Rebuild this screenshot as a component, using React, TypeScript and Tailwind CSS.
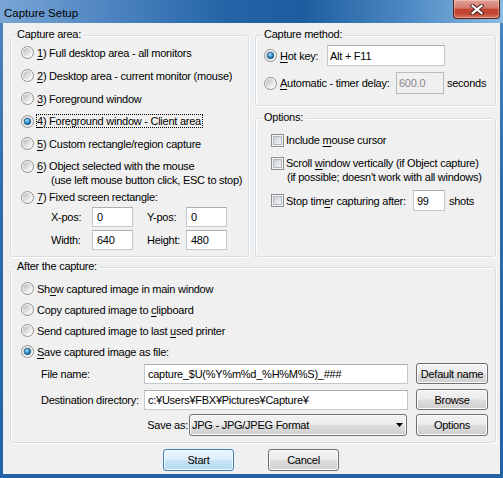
import React from "react";

const inputCls =
  "bg-white border border-[#c3c6cc] border-t-[#abadb3] flex items-center leading-[14px] shrink-0";
const btnCls =
  "flex items-center justify-center shrink-0 rounded-[3px] border border-[#707070] bg-[linear-gradient(to_bottom,#f2f2f2_0%,#ebebeb_48%,#dddddd_52%,#cfcfcf_100%)] shadow-[inset_0_0_0_1px_#fbfbfb] leading-[14px]";
const defBtnCls =
  "flex items-center justify-center shrink-0 rounded-[3px] border border-[#3c7fb1] bg-[linear-gradient(to_bottom,#eaf5fc_0%,#dcedf8_48%,#c8e4f6_52%,#b5daf2_100%)] shadow-[inset_0_0_0_1px_#f4fbff] leading-[14px]";

function Radio({ checked = false }: { checked?: boolean }) {
  return (
    <svg width="13" height="13" viewBox="0 0 13 13" className="block shrink-0">
      <defs>
        <linearGradient id="radInner" x1="0.15" y1="0.15" x2="0.85" y2="0.85">
          <stop offset="0" stopColor="#c4c4c4" />
          <stop offset="1" stopColor="#f8f8f8" />
        </linearGradient>
        <radialGradient id="radDot" cx="0.4" cy="0.35" r="0.7">
          <stop offset="0" stopColor="#b8e8fc" />
          <stop offset="0.45" stopColor="#3c98d4" />
          <stop offset="1" stopColor="#0d4a78" />
        </radialGradient>
      </defs>
      <circle cx="6.5" cy="6.5" r="6" fill="#f6f6f6" stroke="#8e8f8f" />
      <circle cx="6.5" cy="6.5" r="4.5" fill="url(#radInner)" />
      {checked && (
        <circle cx="6.5" cy="6.5" r="3.3" fill="url(#radDot)" stroke="#174f7a" strokeWidth="0.6" />
      )}
    </svg>
  );
}

function Check() {
  return (
    <svg width="13" height="13" viewBox="0 0 13 13" className="block shrink-0">
      <defs>
        <linearGradient id="chkIn" x1="0" y1="0" x2="1" y2="1">
          <stop offset="0" stopColor="#c9cdd3" />
          <stop offset="1" stopColor="#f7f7f7" />
        </linearGradient>
      </defs>
      <rect x="0.5" y="0.5" width="12" height="12" fill="#f4f4f4" stroke="#8e8f8f" />
      <rect x="2.5" y="2.5" width="8" height="8" fill="url(#chkIn)" stroke="#b3b8be" />
    </svg>
  );
}

function Group({
  title,
  titleLeft,
  className,
  children,
}: {
  title: string;
  titleLeft: string;
  className: string;
  children?: React.ReactNode;
}) {
  return (
    <div
      className={`relative shrink-0 border border-[#d5dfe5] rounded-[3px] shadow-[inset_1px_1px_0_#ffffff,1px_1px_0_#ffffff] ${className}`}
    >
      <span className={`absolute -top-[9px] ${titleLeft} px-[2px] bg-[#f0f0f0] leading-[14px]`}>
        {title}
      </span>
      {children}
    </div>
  );
}

function U({ children }: { children: React.ReactNode }) {
  return <span className="underline underline-offset-[1.5px]">{children}</span>;
}

export default function App() {
  return (
    <div className="font-['Liberation_Sans',Arial,sans-serif] text-[11px] tracking-[-0.25px] text-black w-[503px] h-[478px] flex flex-col bg-[linear-gradient(to_bottom,#4f86c0_0%,#2f6cab_40%,#2363a5_100%)]">
      {/* Title bar */}
      <div className="h-[23px] shrink-0 flex items-start justify-between bg-[linear-gradient(to_right,#7aa6d6_0%,#4d84c0_22%,#2465a7_45%,#1d5c9e_60%,#4f8cc5_82%,#8bbbe0_100%)]">
        <span className="pl-[4px] pt-[6px] text-[11.5px] leading-[15px] tracking-normal">Capture Setup</span>
        <div className="mr-[3px] w-[47px] h-[19px] rounded-b-[4px] border border-t-0 border-[#5b2019] bg-[linear-gradient(to_bottom,#e3a095_0%,#d37a6e_45%,#c2412f_52%,#c24a36_78%,#dc7b62_100%)] shadow-[inset_0_0_0_1px_rgba(255,255,255,0.3)] flex items-center justify-center">
          <svg width="14" height="11" viewBox="0 0 14 11">
            <path d="M2.5 1.8 L11.5 9.2 M11.5 1.8 L2.5 9.2" stroke="#3a1512" strokeWidth="4" strokeLinecap="square" />
            <path d="M2.5 1.8 L11.5 9.2 M11.5 1.8 L2.5 9.2" stroke="#ffffff" strokeWidth="2.2" strokeLinecap="square" />
          </svg>
        </div>
      </div>

      {/* Client area */}
      <div className="mx-[3px] mb-[4px] flex-1 bg-[#f0f0f0] pl-[7px] pr-[4px] pt-[12px] flex flex-col">
        <div className="flex gap-[6px]">
          {/* Capture area */}
          <Group title="Capture area:" titleLeft="left-[4px]" className="w-[239px] h-[222px]">
            <div className="flex flex-col pt-[5px]">
              <div className="flex items-center h-[23px] pl-[10px] gap-[3px]">
                <Radio />
                <span className="leading-[14px]"><U>1</U>) Full desktop area - all monitors</span>
              </div>
              <div className="flex items-center h-[23px] pl-[10px] gap-[3px]">
                <Radio />
                <span className="leading-[14px]"><U>2</U>) Desktop area - current monitor (mouse)</span>
              </div>
              <div className="flex items-center h-[23px] pl-[10px] gap-[3px]">
                <Radio />
                <span className="leading-[14px]"><U>3</U>) Foreground window</span>
              </div>
              <div className="flex items-center h-[22px] pl-[10px] gap-[3px]">
                <Radio checked />
                <span className="-ml-px border border-dotted border-black leading-[12px] pr-px"><U>4</U>) Foreground window - Client area</span>
              </div>
              <div className="flex items-center h-[23px] pl-[10px] gap-[3px]">
                <Radio />
                <span className="leading-[14px]"><U>5</U>) Custom rectangle/region capture</span>
              </div>
              <div className="flex items-start h-[32px] pt-[4px] pl-[10px] gap-[3px]">
                <div className="pt-[0.5px]"><Radio /></div>
                <div className="flex flex-col leading-[14px]">
                  <span><U>6</U>) Object selected with the mouse</span>
                  <span className="pl-[14px]">(use left mouse button click, ESC to stop)</span>
                </div>
              </div>
              <div className="flex items-center h-[20px] pl-[10px] gap-[3px]">
                <Radio />
                <span className="leading-[14px]"><U>7</U>) Fixed screen rectangle:</span>
              </div>
              <div className="flex items-center h-[20px] pl-[40px]">
                <span className="w-[41px] shrink-0">X-pos:</span>
                <div className={`${inputCls} w-[41px] h-[20px] pl-[4px]`}>0</div>
                <span className="w-[39px] ml-[14px] shrink-0">Y-pos:</span>
                <div className={`${inputCls} w-[41px] h-[20px] pl-[4px]`}>0</div>
              </div>
              <div className="flex items-center h-[20px] mt-[3px] pl-[40px]">
                <span className="w-[41px] shrink-0">Width:</span>
                <div className={`${inputCls} w-[41px] h-[20px] pl-[4px]`}>640</div>
                <span className="w-[39px] ml-[14px] shrink-0">Height:</span>
                <div className={`${inputCls} w-[41px] h-[20px] pl-[4px]`}>480</div>
              </div>
            </div>
          </Group>

          {/* Right column */}
          <div className="flex flex-col w-[241px] gap-[12px]">
            <Group title="Capture method:" titleLeft="left-[6px]" className="w-[241px] h-[71px]">
              <div className="flex flex-col pt-[9px] pl-[8px]">
                <div className="flex items-center h-[21px]">
                  <Radio checked />
                  <span className="ml-[3px] w-[47px] shrink-0 leading-[14px]"><U>H</U>ot key:</span>
                  <div className={`${inputCls} w-[118px] h-[21px] pl-[2px]`}>Alt + F11</div>
                </div>
                <div className="flex items-center h-[22px] mt-[6px]">
                  <Radio />
                  <span className="ml-[3px] w-[116px] shrink-0 leading-[14px] whitespace-nowrap"><U>A</U>utomatic - timer delay:</span>
                  <div className="flex items-center shrink-0 w-[48px] h-[22px] pl-[2px] border border-[#b8bcc2] bg-[#f0f0f0] text-[#8a8a8a] leading-[14px]">600.0</div>
                  <span className="ml-[3px] leading-[14px]">seconds</span>
                </div>
              </div>
            </Group>

            <Group title="Options:" titleLeft="left-[6px]" className="w-[241px] h-[139px]">
              <div className="flex flex-col pt-[10px] pl-[15px]">
                <div className="flex items-center h-[22px] gap-[2px]">
                  <Check />
                  <span className="leading-[14px]">Include <U>m</U>ouse cursor</span>
                </div>
                <div className="flex items-start h-[35px] pt-[5px] gap-[2px]">
                  <div className="pt-[0.5px]"><Check /></div>
                  <div className="flex flex-col leading-[14px] whitespace-nowrap">
                    <span>Scroll <U>w</U>indow vertically (if Object capture)</span>
                    <span className="pl-[1px]">(if possible; doesn't work with all windows)</span>
                  </div>
                </div>
                <div className="flex items-center h-[21px] mt-[4px]">
                  <Check />
                  <span className="ml-[2px] w-[127px] shrink-0 leading-[14px] whitespace-nowrap">Stop tim<U>e</U>r capturing after:</span>
                  <div className={`${inputCls} w-[32px] h-[21px] pl-[3px]`}>99</div>
                  <span className="ml-[4px] leading-[14px]">shots</span>
                </div>
              </div>
            </Group>
          </div>
        </div>

        {/* After the capture */}
        <Group title="After the capture:" titleLeft="left-[4px]" className="mt-[10px] w-[486px] h-[176px]">
          <div className="flex flex-col pt-[10px]">
            <div className="flex items-center h-[21px] pl-[10px] gap-[3px]">
              <Radio />
              <span className="leading-[14px]">Sh<U>o</U>w captured image in main window</span>
            </div>
            <div className="flex items-center h-[21px] pl-[10px] gap-[3px]">
              <Radio />
              <span className="leading-[14px]">Copy captured image to <U>c</U>lipboard</span>
            </div>
            <div className="flex items-center h-[21px] pl-[10px] gap-[3px]">
              <Radio />
              <span className="leading-[14px]">Send captured image to last <U>u</U>sed printer</span>
            </div>
            <div className="flex items-center h-[21px] pl-[10px] gap-[3px]">
              <Radio checked />
              <span className="leading-[14px]"><U>S</U>ave captured image as file:</span>
            </div>

            <div className="flex items-center h-[21px] mt-[1px] pl-[30px]">
              <span className="w-[103px] shrink-0 leading-[14px]">File name:</span>
              <div className={`${inputCls} w-[264px] h-[20px] pl-[3px]`}>capture_$U(%Y%m%d_%H%M%S)_###</div>
              <div className={`${btnCls} ml-[8px] w-[72px] h-[21px]`}>Default name</div>
            </div>
            <div className="flex items-center h-[21px] mt-[5px] pl-[30px]">
              <span className="w-[103px] shrink-0 leading-[14px]">Destination directory:</span>
              <div className={`${inputCls} w-[264px] h-[20px] pl-[3px]`}>c:¥Users¥FBX¥Pictures¥Capture¥</div>
              <div className={`${btnCls} ml-[8px] w-[72px] h-[21px]`}>Browse</div>
            </div>
            <div className="flex items-center h-[22px] mt-[4px] pl-[30px]">
              <span className="w-[148px] shrink-0 text-right pr-[1px] leading-[14px]">Save as:</span>
              <div className="flex items-center justify-between shrink-0 w-[218px] h-[22px] pl-[2px] pr-[3px] rounded-[3px] border border-[#707070] bg-[linear-gradient(to_bottom,#f2f2f2_0%,#ebebeb_48%,#dddddd_52%,#cfcfcf_100%)] shadow-[inset_0_0_0_1px_#fbfbfb] leading-[14px]">
                <span>JPG - JPG/JPEG Format</span>
                <svg width="7" height="4" viewBox="0 0 7 4" className="block">
                  <path d="M0 0 H7 L3.5 4 Z" fill="#000000" />
                </svg>
              </div>
              <div className={`${btnCls} ml-[9px] w-[72px] h-[22px]`}>Options</div>
            </div>
          </div>
        </Group>

        {/* Buttons */}
        <div className="flex justify-center gap-[34px] pr-[4px] mt-[6px]">
          <div className={`${defBtnCls} w-[71px] h-[22px]`}>Start</div>
          <div className={`${btnCls} w-[71px] h-[22px]`}>Cancel</div>
        </div>
      </div>
    </div>
  );
}
